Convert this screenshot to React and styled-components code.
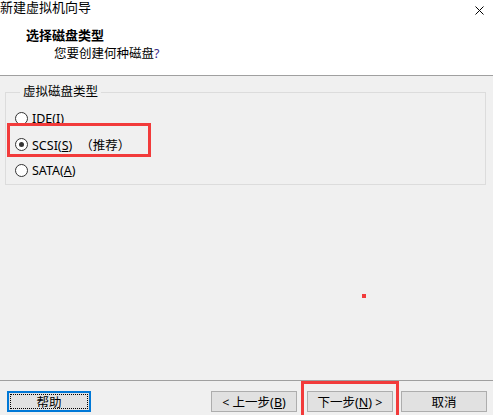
import React from 'react'
import styled, { createGlobalStyle } from 'styled-components'

const Global = createGlobalStyle`
  html, body { margin: 0; padding: 0; background: #f0f0f0; }
  body { font-family: "Noto Sans", "Noto Sans CJK SC", sans-serif; font-size: 12px; color: #000; }
`;

const Window = styled.div`
  position: relative;
  width: 493px;
  height: 415px;
  overflow: hidden;
  background: #f0f0f0;
  display: flex;
  flex-direction: column;
`;

const Header = styled.div`
  height: 75px;
  flex-shrink: 0;
  background: #fff;
  border-bottom: 1px solid #a0a0a0;
  position: relative;
`;

const Title = styled.div`
  font-size: 13px;
  line-height: 14px;
  height: 14px;
`;

const Close = styled.div`
  position: absolute;
  right: 9px;
  top: 2px;
`;

const Heading = styled.div`
  margin: 14px 0 0 26px;
  font-weight: bold;
  font-size: 13px;
  line-height: 14px;
`;

const SubHeading = styled.div`
  margin: 5px 0 0 54px;
  font-size: 12.5px;
  line-height: 14px;
  span { color: #3a2a8a; }
`;

const Body = styled.div`
  flex: 1;
  padding: 9px 7px 0 5px;
`;

const Group = styled.fieldset`
  margin: 0;
  padding: 6px 0 1px 9px;
  border: 1px solid #dcdcdc;
  display: flex;
  flex-direction: column;
`;

const Legend = styled.legend`
  padding: 0 3px;
  margin-left: 5px;
  font-size: 12.5px;
  line-height: 14px;
`;

const Option = styled.div`
  position: relative;
  flex-shrink: 0;
  display: flex;
  align-items: center;
  height: 26px;
  font-size: 12.5px;
  ${p => p.$marked && `
    &::after {
      content: '';
      position: absolute;
      left: -8px;
      top: -8px;
      width: 138px;
      height: 28px;
      border: 3px solid #f23b3b;
    }
  `}
`;

const Label = styled.span`
  margin-left: 4px;
  white-space: nowrap;
`;

const Radio = styled.span`
  flex-shrink: 0;
  width: 11px;
  height: 11px;
  border-radius: 50%;
  border: 1px solid #333;
  background: #fff;
  display: inline-flex;
  align-items: center;
  justify-content: center;
  &::before {
    content: '';
    width: 5px;
    height: 5px;
    border-radius: 50%;
    background: ${p => (p.$on ? '#333' : 'transparent')};
  }
`;

const Note = styled.span`
  margin-left: 8px;
`;

const Dot = styled.div`
  position: absolute;
  left: 362px;
  top: 294px;
  width: 4px;
  height: 4px;
  background: #f23b3b;
`;

const Footer = styled.div`
  height: 35px;
  flex-shrink: 0;
  border-top: 1px solid #a0a0a0;
  display: flex;
  align-items: flex-start;
  padding: 10px 6px 0 7px;
  box-sizing: border-box;
`;

const Button = styled.div`
  width: ${p => p.$w || 86}px;
  height: 21px;
  box-sizing: border-box;
  background: #e1e1e1;
  border: 1px solid #adadad;
  display: flex;
  align-items: center;
  justify-content: center;
  font-size: 12.5px;
  white-space: pre;
  margin-left: ${p => p.$gap || 0}px;
  position: relative;
  ${p => p.$focus && `
    border: 2px solid #0078d7;
    &::before {
      content: '';
      position: absolute;
      inset: 1px;
      border: 1px dotted #000;
    }
  `}
  ${p => p.$marked && `
    &::after {
      content: '';
      position: absolute;
      left: -7px;
      top: -11px;
      width: 92px;
      height: 34px;
      border: 3px solid #f23b3b;
    }
  `}
`;

const Caption = styled.span`
  white-space: nowrap;
`;

export default function App() {
  return (
    <Window>
      <Global />
      <Header>
        <Title>新建虚拟机向导</Title>
        <Close>
          <svg width="9" height="9" viewBox="0 0 9 9">
            <path d="M0.5 0.5L8.5 8.5M8.5 0.5L0.5 8.5" stroke="#000" strokeWidth="1" />
          </svg>
        </Close>
        <Heading>选择磁盘类型</Heading>
        <SubHeading>您要创建何种磁盘<span>?</span></SubHeading>
      </Header>
      <Body>
        <Group>
          <Legend>虚拟磁盘类型</Legend>
          <Option><Radio /><Label>IDE(I)</Label></Option>
          <Option $marked><Radio $on /><Label>SCSI(<u>S</u>)<Note>（推荐）</Note></Label></Option>
          <Option><Radio /><Label>SATA(<u>A</u>)</Label></Option>
        </Group>
      </Body>
      <Dot />
      <Footer>
        <Button $w={84} $focus><Caption>帮助</Caption></Button>
        <Button $gap={120}><Caption>&lt; 上一步(<u>B</u>)</Caption></Button>
        <Button $gap={10} $marked><Caption>下一步(<u>N</u>) &gt;</Caption></Button>
        <Button $gap={8}><Caption>取消</Caption></Button>
      </Footer>
    </Window>
  )
}
